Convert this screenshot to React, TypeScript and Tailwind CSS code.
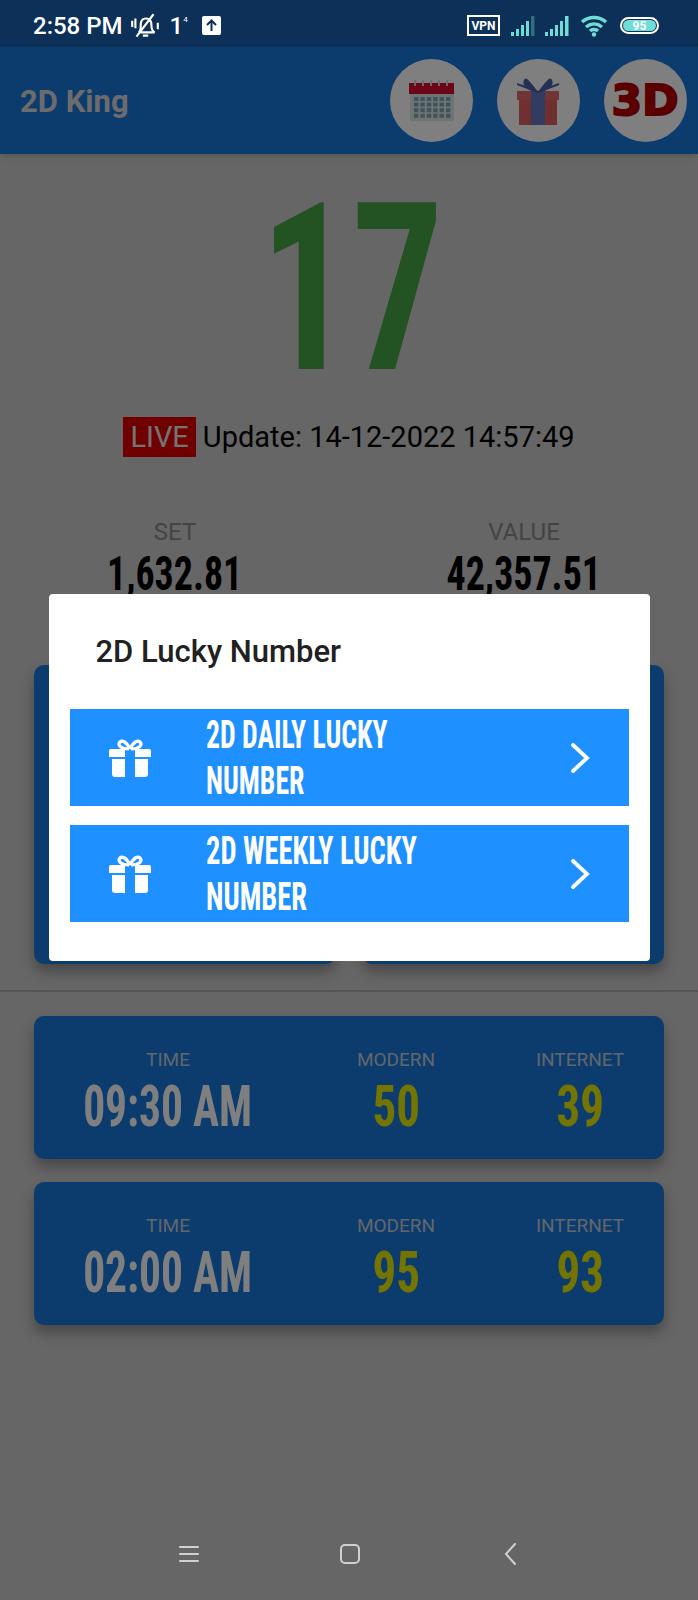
import React from "react";

const bebas = "font-['Liberation_Sans_Narrow','Roboto_Condensed','Liberation_Sans',sans-serif] font-bold whitespace-nowrap";
const roboto = "font-['Roboto',sans-serif]";

function Signal({ faded }: { faded?: boolean }) {
  return (
    <svg width="28" height="22" viewBox="0 0 24 22">
      <rect x="0" y="17" width="3" height="4" fill="#6fdcd6" />
      <rect x="5" y="14" width="3" height="7" fill="#6fdcd6" />
      <rect x="10" y="10" width="3" height="11" fill="#6fdcd6" />
      <rect x="15" y="6" width="3" height="15" fill="#6fdcd6" />
      <rect x="20" y="1" width="3.5" height="20" fill={faded ? "#2f6f80" : "#6fdcd6"} />
    </svg>
  );
}

function Gift({ className }: { className?: string }) {
  return (
    <svg className={className} viewBox="0 0 42 38" fill="#fff">
      <path d="M0 12a2 2 0 0 1 2-2h14v8H0zM26 10h14a2 2 0 0 1 2 2v6H26zM3 20h13v18H6a3 3 0 0 1-3-3zM26 20h13v15a3 3 0 0 1-3 3H26z" />
      <path d="M21 10C17 2 13 1 11 3c-3 3 1 7 9 7M21 10c4-8 8-9 10-7 3 3-1 7-9 7" fill="none" stroke="#fff" strokeWidth="3.2" />
    </svg>
  );
}

function Calendar() {
  const dots = Array.from({ length: 24 });
  return (
    <svg width="46" height="42" viewBox="0 0 46 42">
      <rect x="1" y="3" width="44" height="38" fill="#dfe6e6" />
      <rect x="0" y="3" width="45" height="11" fill="#d80a34" />
      {[5, 13, 21, 29, 37].map((x) => (
        <rect key={x} x={x} y="0" width="2" height="6" fill="#d0d8d8" />
      ))}
      {dots.map((_, i) => (
        <rect key={i} x={5 + (i % 6) * 6.4} y={17 + Math.floor(i / 6) * 5.6} width="4.400" height="4" fill="#7fa6b4" />
      ))}
    </svg>
  );
}

function BigGift() {
  return (
    <svg width="44" height="50" viewBox="0 0 44 50">
      <rect x="2" y="20" width="38" height="29" fill="#e06060" />
      <rect x="0" y="15" width="42" height="9" fill="#e46a6a" />
      <rect x="14" y="15" width="14" height="34" fill="#6478c0" />
      <path d="M21 16C12 4 9 0 7 4S8 15 21 16C30 4 33 0 35 4S34 15 21 16z" fill="#4860a8" />
      <path d="M21 16L0 8M21 16L42 8" stroke="#4860a8" strokeWidth="2" />
    </svg>
  );
}

function Cell({ label, value, tone, widthClass, marginClass, squeeze }: { label: string; value: string; tone: string; widthClass: string; marginClass: string; squeeze: string }) {
  return (
    <div className={`${widthClass} ${marginClass} flex flex-col items-center`}>
      <div className={`${roboto} text-[19px] leading-5 text-[#c4cdd6]`}>{label}</div>
      <div className={`${bebas} text-[58px] leading-[58px] mt-[7px] ${squeeze} ${tone}`}>{value}</div>
    </div>
  );
}

function ResultCard({ time, modern, internet }: { time: string; modern: string; internet: string }) {
  return (
    <div className="h-[143px] rounded-[10px] bg-[#1878dc] shadow-[0_8px_14px_rgba(0,0,0,0.3)] flex items-center pl-[51px] pt-[10px]">
      <Cell label="TIME" value={time} tone="text-white" widthClass="w-[166px]" marginClass="" squeeze="scale-x-[0.75]" />
      <Cell label="MODERN" value={modern} tone="text-[#e8e800]" widthClass="w-[92px]" marginClass="ml-[99px]" squeeze="scale-x-[0.81]" />
      <Cell label="INTERNET" value={internet} tone="text-[#e8e800]" widthClass="w-[92px]" marginClass="ml-[92px]" squeeze="scale-x-[0.81]" />
    </div>
  );
}

function LuckyButton({ line1, squeeze }: { line1: string; squeeze: string }) {
  return (
    <div className="h-[97px] bg-[#1e90ff] flex items-center text-white">
      <Gift className="w-[44px] h-[38px] ml-[38px] shrink-0" />
      <div className={`${bebas} ml-[54px] w-[320px] text-[38px] leading-[46px] ${squeeze} origin-left`}>
        <div>{line1}</div>
        <div>NUMBER</div>
      </div>
      <svg className="ml-[44px]" width="20" height="30" viewBox="0 0 20 30" fill="none" stroke="#fff" strokeWidth="3.800" strokeLinecap="round">
        <path d="M3 2l14 13L3 28" />
      </svg>
    </div>
  );
}

export default function App() {
  return (
    <div className={`w-[698px] h-[1600px] flex flex-col overflow-hidden bg-[#666] ${roboto}`}>
      <div className="h-[47px] shrink-0 bg-[#0c3058] flex items-center pt-[4px] text-white">
        <span className="ml-[33px] text-[24px] font-medium">2:58 PM</span>
        <svg className="ml-[6px]" width="32" height="30" viewBox="0 0 30 28" fill="none" stroke="#fff" strokeWidth="2">
          <path d="M9 20c2-1 2-4 2-7 0-4 2-6 5-6s5 2 5 6 1 6 3 7zM13 23h5M7 24L23 3M3 9v6M6 7v9M27 11v6" />
        </svg>
        <span className="ml-[9px] text-[24px] font-medium leading-none">1</span>
        <span className="text-[8px] mb-3">4</span>
        <span className="ml-[14px] w-[19px] h-[19px] rounded-[2px] bg-white flex items-center justify-center">
          <svg width="13" height="13" viewBox="0 0 13 13" fill="none" stroke="#0c3058" strokeWidth="2">
            <path d="M6.500 12V2M2 6l4.500-4.500L11 6" />
          </svg>
        </span>
        <span className="ml-auto w-[33px] h-[21px] border-2 border-white text-[12px] font-bold flex items-center justify-center leading-none">VPN</span>
        <span className="ml-[9px] flex items-center"><Signal faded /></span>
        <span className="ml-[6px] flex items-center"><Signal /></span>
        <svg className="ml-[9px]" width="28" height="22" viewBox="0 0 28 22" fill="none" stroke="#6fdcd6" strokeWidth="3.500">
          <path d="M2 7c7-6 17-6 24 0M6 12c5-4 11-4 16 0M10 16c2-2 6-2 8 0" />
          <circle cx="14" cy="19.500" r="2.200" fill="#6fdcd6" stroke="none" />
        </svg>
        <span className="ml-[12px] mr-[39px] w-[39px] h-[17px] rounded-full border-2 border-white flex items-center p-[1px]">
          <span className="w-full h-full rounded-full bg-[#6fdcd6] text-[12px] leading-none text-white font-bold flex items-center justify-center">95</span>
        </span>
      </div>

      <div className="relative flex-1 bg-[#cccccc] flex flex-col">
        <div className="h-[107px] shrink-0 bg-[#1878dc] flex items-center shadow-md">
          <div className="ml-[20px] pt-[4px] text-[31px] font-bold text-[#d8d8d8] mr-auto">2D King</div>
          <div className="w-[83px] h-[83px] rounded-full bg-white flex items-center justify-center"><Calendar /></div>
          <div className="ml-[24px] w-[83px] h-[83px] rounded-full bg-white flex items-center justify-center"><BigGift /></div>
          <div className="ml-[24px] mr-[11px] w-[83px] h-[83px] rounded-full bg-white flex items-center justify-center">
            <span className="font-['DejaVu_Sans',sans-serif] font-bold text-[42px] leading-none text-[#b40000] [-webkit-text-stroke:2px_#b40000] scale-x-105">3D</span>
          </div>
        </div>

        <div className="mt-[18px] h-[235px] flex justify-center pl-[6px]">
          <div className={`${bebas} text-[233px] leading-[235px] scale-x-[0.78] text-[#46a446]`}>17</div>
        </div>

        <div className="mt-[10px] flex items-center justify-center text-[29px] text-black leading-none">
          <span className="h-[40px] px-[7px] bg-[#e00000] text-[#e8e8e8] flex items-center">LIVE</span>
          <span className="ml-[7px]">Update: 14-12-2022 14:57:49</span>
        </div>

        <div className="mt-[61px] flex text-center">
          <div className="w-[350px] shrink-0 flex flex-col items-center">
            <div className="text-[24px] leading-7 text-[#888]">SET</div>
            <div className={`${bebas} text-[48px] leading-[48px] mt-[4px] scale-x-[0.79] text-black`}>1,632.81</div>
          </div>
          <div className="w-[348px] shrink-0 flex flex-col items-center">
            <div className="text-[24px] leading-7 text-[#888]">VALUE</div>
            <div className={`${bebas} text-[48px] leading-[48px] mt-[4px] scale-x-[0.79] text-black`}>42,357.51</div>
          </div>
        </div>

        <div className="mx-[34px] mt-[67px] h-[299px] flex gap-[26px]">
          <div className="flex-1 rounded-[10px] bg-[#1878dc] shadow-[0_8px_14px_rgba(0,0,0,0.3)]" />
          <div className="flex-1 rounded-[10px] bg-[#1878dc] shadow-[0_8px_14px_rgba(0,0,0,0.3)]" />
        </div>

        <div className="mt-[26px] h-[2px] bg-[#aaaaaa]" />

        <div className="mx-[34px] mt-[24px] flex flex-col gap-[23px]">
          <ResultCard time="09:30 AM" modern="50" internet="39" />
          <ResultCard time="02:00 AM" modern="95" internet="93" />
        </div>

        <div className="absolute inset-0 bg-black/50 flex items-center justify-center">
          <div className="w-[601px] h-[367px] rounded-[4px] bg-white px-[21px]">
            <div className="pt-[42px] pl-[26px] text-[31px] leading-8 font-medium text-[#212121]">2D Lucky Number</div>
            <div className="mt-[41px] flex flex-col gap-[19px]">
              <LuckyButton line1="2D DAILY LUCKY" squeeze="scale-x-[0.73]" />
              <LuckyButton line1="2D WEEKLY LUCKY" squeeze="scale-x-[0.75]" />
            </div>
          </div>
        </div>
      </div>

      <div className="h-[92px] shrink-0 bg-[#666] flex items-center">
        <svg className="ml-[179px]" width="20" height="18" viewBox="0 0 20 18" stroke="#d0d0d0" strokeWidth="2" strokeLinecap="round">
          <path d="M1 2h18M1 9h18M1 16h18" />
        </svg>
        <svg className="ml-[140px]" width="22" height="22" viewBox="0 0 22 22" fill="none" stroke="#d0d0d0" strokeWidth="2">
          <rect x="2" y="2" width="18" height="18" rx="4" />
        </svg>
        <svg className="ml-[143px]" width="14" height="22" viewBox="0 0 14 22" fill="none" stroke="#d0d0d0" strokeWidth="2" strokeLinecap="round">
          <path d="M11 1L2 11l9 10" />
        </svg>
      </div>
    </div>
  );
}
